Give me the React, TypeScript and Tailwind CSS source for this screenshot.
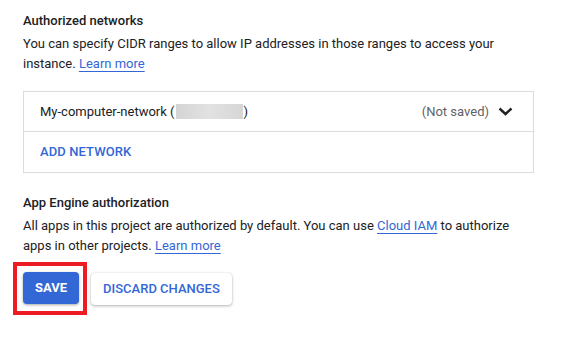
import React from 'react';

const App: React.FC = () => {
  return (
    <div className="min-h-screen bg-white pl-[23px] pr-[46px] pt-[11px] text-[#202124] font-['Roboto',sans-serif]">
      {/* Authorized networks */}
      <h3 className="text-[13px] leading-[20px] font-medium">Authorized networks</h3>
      <p className="mt-[3px] text-[13px] leading-[20px]">
        You can specify CIDR ranges to allow IP addresses in those ranges to access your instance.{' '}
        <a href="#" className="text-[#3367d6] underline underline-offset-[3px] decoration-[#3367d6]">Learn more</a>
      </p>

      <div className="mt-[17px] w-[511px] border border-[#dadce0]">
        <div className="flex h-[40px] items-center justify-between border-b border-[#dadce0] pl-[16px] pr-[20px]">
          <div className="flex items-center text-[13px]">
            <span>My-computer-network (</span>
            <span className="mx-[1px] h-[15px] w-[67px] bg-[linear-gradient(90deg,#d4d4d4,#e2e2e2_50%,#d6d6d6)]"></span>
            <span>)</span>
          </div>
          <div className="flex items-center gap-[9px]">
            <span className="text-[13px] text-[#5f6368]">(Not saved)</span>
            <svg width="15" height="9" viewBox="0 0 15 9" fill="none">
              <path d="M1.5 1.5 L7.5 7 L13.5 1.5" stroke="#202124" strokeWidth="2.4" />
            </svg>
          </div>
        </div>
        <div className="flex h-[40px] items-center pl-[16px]">
          <button className="text-[13px] font-medium tracking-[0.1px] text-[#3367d6]">ADD NETWORK</button>
        </div>
      </div>

      {/* App Engine authorization */}
      <h3 className="mt-[20px] text-[13px] leading-[20px] font-medium">App Engine authorization</h3>
      <p className="mt-[3px] text-[13px] leading-[20px]">
        All apps in this project are authorized by default. You can use{' '}
        <a href="#" className="text-[#3367d6] underline underline-offset-[3px] decoration-[#3367d6]">Cloud IAM</a>{' '}
        to authorize apps in other projects.{' '}
        <a href="#" className="text-[#3367d6] underline underline-offset-[3px] decoration-[#3367d6]">Learn more</a>
      </p>

      <div className="mt-[6px] -ml-[10px] flex items-center gap-[4px]">
        <div className="border-4 border-[#ed1c24] pl-[6px] pr-[4px] pt-[6px] pb-[7px]">
          <button className="h-[32px] rounded-[4px] bg-[#3367d6] px-[12px] text-[13px] font-bold text-white shadow-[0_1px_3px_rgba(0,0,0,0.35)]">
            SAVE
          </button>
        </div>
        <button className="h-[32px] rounded-[4px] bg-white px-[12px] text-[13px] font-medium text-[#3367d6] shadow-[0_1px_3px_rgba(0,0,0,0.3),0_0_1px_rgba(0,0,0,0.15)]">
          DISCARD CHANGES
        </button>
      </div>
    </div>
  );
};

export default App;
